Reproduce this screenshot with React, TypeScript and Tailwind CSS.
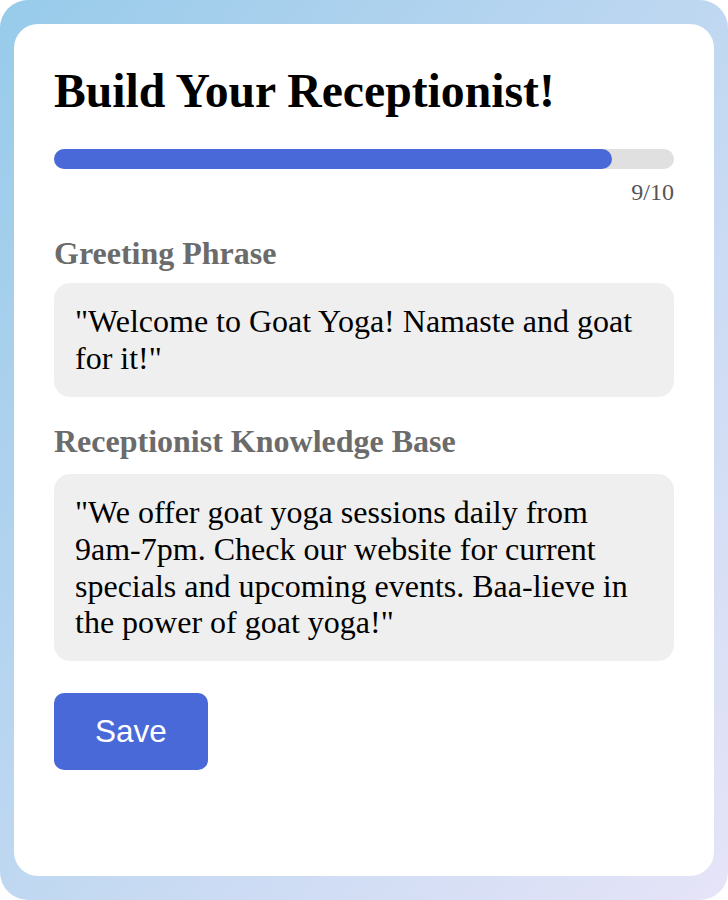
export default function App() {
  const step = 9
  const total = 10

  return (
    <div className="h-[900px] w-full bg-white">
      <div className="flex h-full flex-col rounded-[28px] bg-linear-to-br from-[#97cbea] to-[#e6e4f8] px-[14px] py-[24px]">
        <div
          className="flex-1 rounded-[24px] bg-white p-[40px] text-black"
          style={{ fontFamily: '"Liberation Serif", "Times New Roman", serif' }}
        >
          <h1 className="m-0 text-[47.7px] font-bold leading-[54px]">Build Your Receptionist!</h1>

          <div className="mt-[31px] h-[20px] w-full rounded-full bg-[#e0e0e0]">
            <div
              className="h-full rounded-full bg-[#4a69d9]"
              style={{ width: `${(step / total) * 100}%` }}
            />
          </div>
          <div className="mt-[9px] text-right text-[24px] leading-[28px] text-[#555555]">
            {step}/{total}
          </div>

          <div className="mt-[29px] text-[32px] font-bold leading-[36px] text-[#6b6b6b]">
            Greeting Phrase
          </div>
          <div className="mt-[12px] rounded-[16px] bg-[#efefef] px-[21px] py-[20px] text-[32px] leading-[37px]">
            "Welcome to Goat Yoga! Namaste and goat for it!"
          </div>

          <div className="mt-[26px] text-[32px] font-bold leading-[36px] text-[#6b6b6b]">
            Receptionist Knowledge Base
          </div>
          <div className="mt-[15px] rounded-[16px] bg-[#efefef] px-[21px] py-[20px] text-[32px] leading-[36.75px]">
            "We offer goat yoga sessions daily from 9am-7pm. Check our website for current specials and
            upcoming events. Baa-lieve in the power of goat yoga!"
          </div>

          <button
            className="mt-[32px] rounded-[10px] bg-[#4a69d9] px-[41px] py-[20px] text-[31.5px] leading-[37px] text-white"
            style={{ fontFamily: '"Liberation Sans", Arial, sans-serif' }}
          >
            Save
          </button>
        </div>
      </div>
    </div>
  )
}
